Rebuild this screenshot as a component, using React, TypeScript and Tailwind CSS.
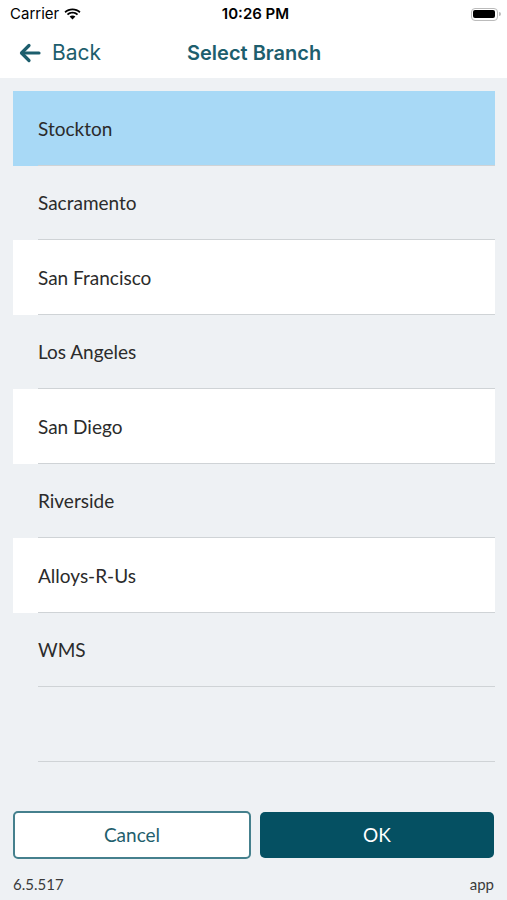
import type { ReactNode } from "react"

const branches = ["Stockton", "Sacramento", "San Francisco", "Los Angeles", "San Diego", "Riverside", "Alloys-R-Us", "WMS", ""]

function StatusBar() {
  return (
    <div className="flex h-[28px] items-center justify-between pl-[10px] pr-[6px] font-['Inter',sans-serif] text-[15px] text-black">
      <div className="flex w-[140px] items-center gap-[5px]">
        <span>Carrier</span>
        <svg width="17" height="12" viewBox="0 0 17 12">
          <path d="M8.5 2.2c2.6 0 5 1 6.8 2.7l1.2-1.3C14.4 1.6 11.6.4 8.5.4S2.6 1.6.5 3.6l1.2 1.3C3.5 3.2 5.9 2.2 8.5 2.2z" fill="#000" />
          <path d="M8.5 5.6c1.7 0 3.2.6 4.4 1.7l1.2-1.3C12.6 4.6 10.6 3.8 8.5 3.8S4.4 4.6 2.9 6l1.2 1.3c1.2-1.1 2.7-1.7 4.4-1.7z" fill="#000" />
          <path d="M8.5 11.6l2.9-3.1c-.8-.7-1.8-1.1-2.9-1.1s-2.1.4-2.9 1.1z" fill="#000" />
        </svg>
      </div>
      <span className="font-semibold">10:26 PM</span>
      <div className="flex w-[140px] justify-end">
        <div className="flex items-center">
          <div className="rounded-[4px] border border-[#bbb] p-[1.5px]">
            <div className="h-[8px] w-[22px] rounded-[2px] bg-black" />
          </div>
          <div className="ml-[1px] h-[4px] w-[2px] rounded-r-sm bg-[#bbb]" />
        </div>
      </div>
    </div>
  )
}

function NavBar() {
  return (
    <div className="relative flex h-[50px] items-center bg-white px-[18px] text-[#1d5e6d]">
      <div className="flex items-center gap-[10px]">
        <svg width="24" height="22" viewBox="0 0 24 22" fill="none" stroke="currentColor" strokeWidth="3.2" strokeLinecap="round" strokeLinejoin="round">
          <path d="M21 11H4" />
          <path d="M11 3.5L3.5 11l7.5 7.5" />
        </svg>
        <span className="font-['Inter',sans-serif] text-[21px]">Back</span>
      </div>
      <div className="absolute left-[187px] font-['Inter',sans-serif] text-[20px] font-semibold">Select Branch</div>
    </div>
  )
}

function BranchRow({ name, index }: { name: string; index: number }) {
  const bg = index === 0 ? "bg-[#a8d9f6]" : index % 2 === 0 && name ? "bg-white" : "bg-transparent"
  return (
    <div className={`h-[74.5px] ${bg}`}>
      <div className="ml-[25px] flex h-full items-center border-b border-[#cfd3d6] pt-[2px] text-[19px] text-[#2b2b2b]">{name}</div>
    </div>
  )
}

function Button({ children, primary }: { children: ReactNode; primary?: boolean }) {
  return (
    <button
      className={
        primary
          ? "h-[46px] flex-1 rounded-[5px] bg-[#055062] text-[19px] text-white"
          : "h-[48px] flex-1 rounded-[5px] border-2 border-[#45808d] bg-white text-[19px] text-[#1f5e6d]"
      }
    >
      {children}
    </button>
  )
}

export default function App() {
  return (
    <div className="flex h-[900px] w-[507px] flex-col bg-[#eef1f4] font-['Lato',sans-serif]">
      <div className="bg-white">
        <StatusBar />
      </div>
      <NavBar />
      <div className="flex-1 pl-[13px] pr-[12px] pt-[13px]">
        {branches.map((b, i) => (
          <BranchRow key={i} name={b} index={i} />
        ))}
      </div>
      <div className="flex items-center gap-[9px] px-[13px] pb-[13px]">
        <Button>Cancel</Button>
        <Button primary>OK</Button>
      </div>
      <div className="flex h-[28px] items-start justify-between px-[13px] pt-[1px] text-[15px] text-[#3a3a3a]">
        <span>6.5.517</span>
        <span>app</span>
      </div>
    </div>
  )
}
